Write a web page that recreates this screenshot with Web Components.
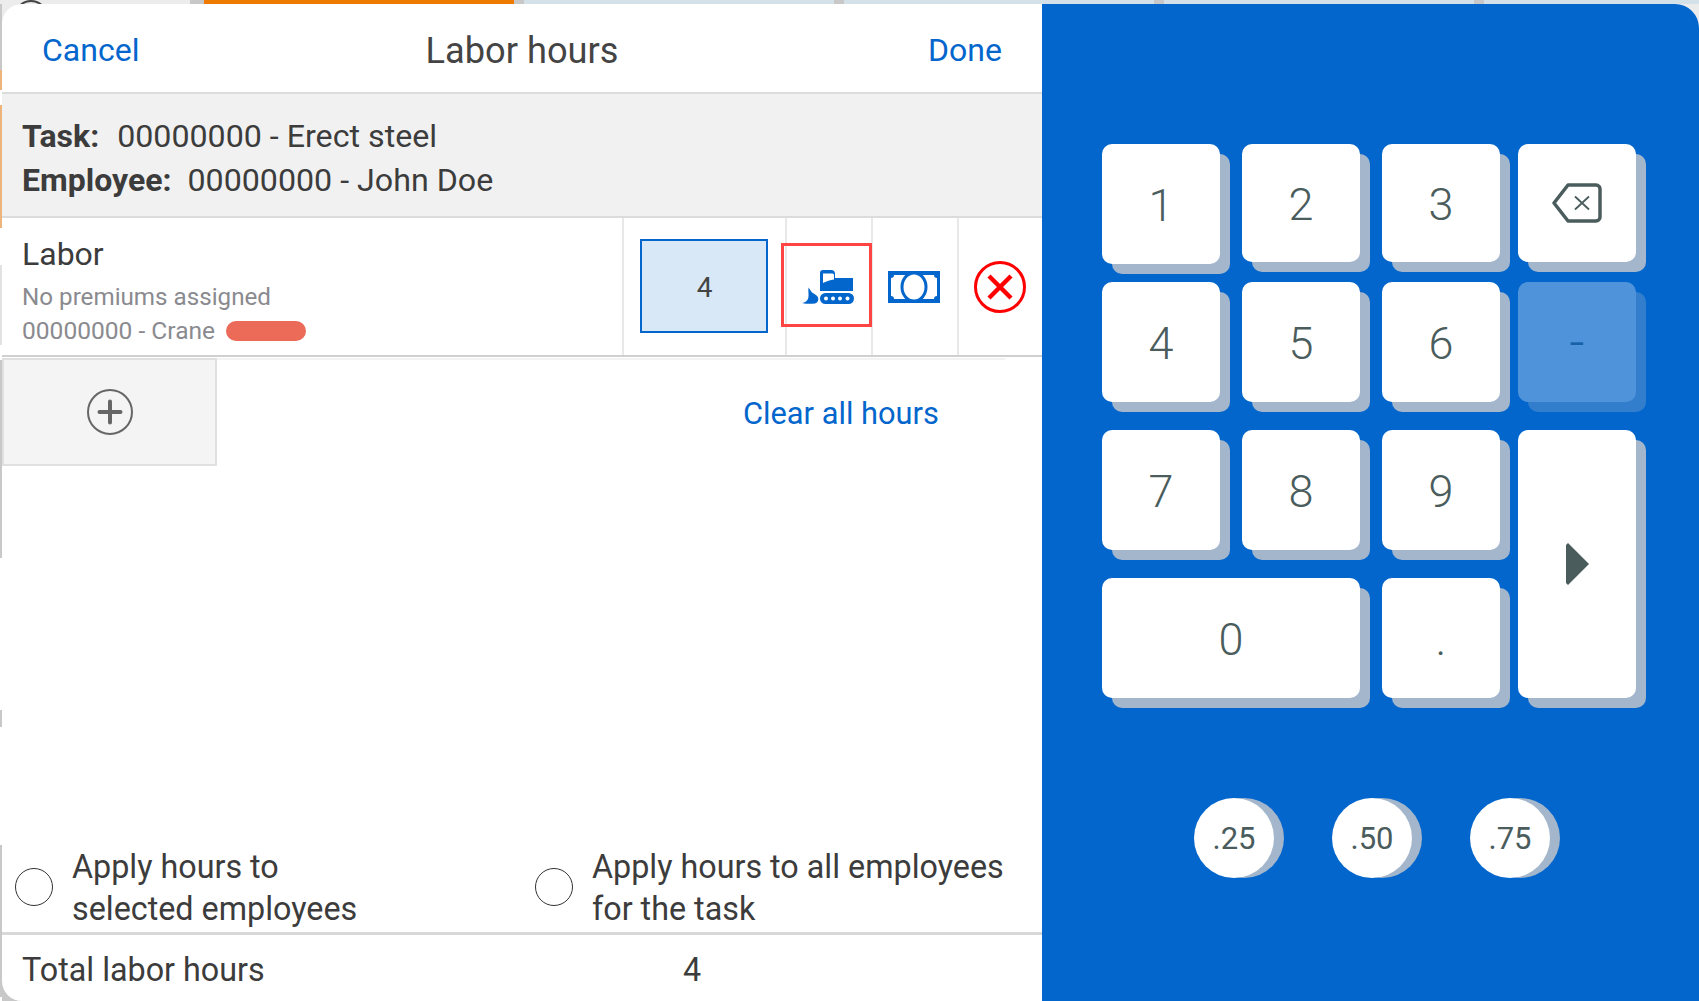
<!DOCTYPE html>
<html lang="en">
<head>
<meta charset="utf-8">
<title>Labor hours</title>
<style>
  html, body { margin: 0; height: 100%; overflow: hidden; }
  body { font-family: Roboto, "Liberation Sans", sans-serif; }
</style>
</head>
<body>
<labor-hours-screen>
  <dialog-header slot="left">
    <span slot="start">Cancel</span>
    Labor hours
    <span slot="end">Done</span>
  </dialog-header>
  <task-summary slot="left">
    <span slot="task">00000000 - Erect steel</span>
    <span slot="employee">00000000 - John Doe</span>
  </task-summary>
  <labor-row slot="left" value="4">
    <span slot="title">Labor</span>
    <span slot="premium">No premiums assigned</span>
    <span slot="equipment">00000000 - Crane</span>
  </labor-row>
  <add-row slot="left">Clear all hours</add-row>
  <apply-options slot="left">
    <radio-option>Apply hours to<br>selected employees</radio-option>
    <radio-option>Apply hours to all employees<br>for the task</radio-option>
  </apply-options>
  <total-row slot="left" value="4">Total labor hours</total-row>
  <key-pad slot="right"></key-pad>
</labor-hours-screen>

<script>
// Строит shadow root из строки разметки
function shadow(el, html) {
  el.attachShadow({ mode: 'open' }).innerHTML = html;
}

class LaborHoursScreen extends HTMLElement {
  constructor() {
    super();
    // Полоса и рейка - то, что виднеется из-под модального окна
    const strip = [
      [190, '#ececec'], [14, '#c8c8c8'], [310, '#ee7a00'], [10, '#c8c8c8'], [310, '#d5e1e8'],
      [10, '#c8c8c8'], [310, '#d5e1e8'], [10, '#c8c8c8'], [310, '#d5e1e8'], [10, '#c8c8c8'], [215, '#d5e1e8'],
    ].map(([w, c]) => `<i style="width:${w}px;background:${c}"></i>`).join('');
    const rail = [
      [70, '#c8c8c8'], [20, '#edb47c'], [15, '#fff'], [123, '#edb47c'], [37, '#fff'], [80, '#e2e2e2'],
      [15, '#fff'], [198, '#c8c8c8'], [152, '#fff'], [17, '#c8c8c8'], [118, '#fff'], [152, '#c8c8c8'],
    ].map(([h, c]) => `<i style="height:${h}px;background:${c}"></i>`).join('');

    shadow(this, `
      <style>
        :host {
          display: grid;
          grid-template-columns: 2px 1fr;
          grid-template-rows: 4px 997px;
          width: 1699px;
          height: 1001px;
          background: linear-gradient(#ececec 0 40px, #c8c8c8 40px);
        }
        .strip { grid-column: 1 / 3; display: flex; position: relative; overflow: hidden; }
        .strip i { display: block; flex: none; height: 4px; }
        .arc {
          position: absolute; left: 14px; top: 0; width: 34px; height: 34px;
          border: 2px solid #444; border-radius: 50%; box-sizing: border-box;
        }
        .rail { display: flex; flex-direction: column; margin-top: -4px; overflow: hidden; background: #fff; }
        .rail i { display: block; flex: none; width: 1.5px; }
        .modal {
          display: grid;
          grid-template-columns: 1040px 1fr;
          border-radius: 20px 24px 0 20px;
          overflow: hidden;
          background: #fff;
        }
        .left { display: flex; flex-direction: column; min-height: 0; }
        .right { background: #0366cc; }
      </style>
      <div class="strip">${strip}<div class="arc"></div></div>
      <div class="rail">${rail}</div>
      <div class="modal">
        <div class="left"><slot name="left"></slot></div>
        <div class="right"><slot name="right"></slot></div>
      </div>
    `);
  }
}

class DialogHeader extends HTMLElement {
  constructor() {
    super();
    shadow(this, `
      <style>
        :host {
          display: grid;
          grid-template-columns: 1fr auto 1fr;
          align-items: center;
          height: 84px;
          padding: 4px 40px 0;
          border-bottom: 2px solid #dcdcdc;
          color: #444;
          font-size: 36.200px;
        }
        .link { color: #0366cc; font-size: 32px; }
        .end { text-align: right; }
      </style>
      <div class="link"><slot name="start"></slot></div>
      <div><slot></slot></div>
      <div class="link end"><slot name="end"></slot></div>
    `);
  }
}

class TaskSummary extends HTMLElement {
  constructor() {
    super();
    shadow(this, `
      <style>
        :host {
          display: flex;
          flex-direction: column;
          justify-content: center;
          height: 116px;
          padding: 6px 20px 0;
          background: #f1f1f1;
          border-bottom: 2px solid #dcdcdc;
          color: #3c3c3c;
          font-size: 32.200px;
          line-height: 44px;
        }
        b { font-size: 32px; font-weight: 700; margin-right: 10px; }
        .tight { margin-right: 8px; }
      </style>
      <div><b>Task:</b> <slot name="task"></slot></div>
      <div><b class="tight">Employee:</b> <slot name="employee"></slot></div>
    `);
  }
}

class LaborRow extends HTMLElement {
  constructor() {
    super();
    shadow(this, `
      <style>
        :host {
          display: grid;
          grid-template-columns: 620px 163px 86px 86px 1fr;
          height: 137px;
          border-bottom: 2px solid #d0d0d0;
        }
        .info { padding: 14px 0 0 20px; color: #8a8a8f; font-size: 24.200px; }
        .title { color: #3c3c3c; font-size: 32px; line-height: 44px; margin-bottom: 5px; }
        .line { line-height: 33px; display: flex; align-items: center; }
        .equipment { font-size: 24.550px; }
        .pill { width: 80px; height: 20px; margin: 1px 0 0 11px; border-radius: 10px; background: #ec6a58; }
        .cell {
          display: flex; align-items: center; justify-content: center;
          border-left: 2px solid #e8e8e8; position: relative;
        }
        .input {
          box-sizing: border-box; width: 128px; height: 94px;
          padding: 2px 0 0 2px; margin: 0 2px 1px 0;
          display: flex; align-items: center; justify-content: center;
          border: 2px solid #0366cc; background: #d9e8f7;
          color: #444; font-size: 28px;
        }
        .focus {
          position: absolute; z-index: 1; left: -6px; top: 25px; width: 91px; height: 84px;
          box-sizing: border-box; border: 3px solid #ff4444;
        }
        .nudge { margin-left: -2px; }
        svg { display: block; }
      </style>
      <div class="info">
        <div class="title"><slot name="title"></slot></div>
        <div class="line"><slot name="premium"></slot></div>
        <div class="line equipment"><slot name="equipment"></slot><div class="pill"></div></div>
      </div>
      <div class="cell"><div class="input">${this.getAttribute('value')}</div></div>
      <div class="cell">
        <div class="focus"></div>
        <svg class="nudge" width="52" height="34" viewBox="0 0 52 34" fill="#0366cc">
          <path d="M18 3a3 3 0 0 1 3-3h8a4 4 0 0 1 4 4v4h18v13H18z"/>
          <path fill="#fff" d="M21 3.500h9.500a1.500 1.500 0 0 1 1.500 1.500v4.500c-4 .5-7 1.500-11 3.500z"/>
          <rect x="18" y="23" width="34" height="11" rx="5.500"/>
          <g fill="#fff"><circle cx="24" cy="28.500" r="2"/><circle cx="31" cy="28.500" r="2"/><circle cx="38" cy="28.500" r="2"/><circle cx="45.500" cy="28.500" r="2"/></g>
          <path d="M6.500 17.500l3.500 5c3 1.500 5.500 3 6.200 5.500.6 2.500-.7 5-3.200 5.500C9 34 4 34 0 33c3-.5 5.500-2 6.300-5 .7-3.500-.3-7 .2-10.500z"/>
        </svg>
      </div>
      <div class="cell">
        <svg class="nudge" width="52" height="32" viewBox="0 0 52 32">
          <rect width="52" height="32" fill="#0366cc"/>
          <path fill="#fff" d="M6 4h40c0 2 1 3 3 3v18c-2 0-3 1-3 3H6c0-2-1-3-3-3V7c2 0 3-1 3-3z"/>
          <ellipse cx="26" cy="16" rx="12" ry="14" fill="#fff" stroke="#0366cc" stroke-width="3"/>
        </svg>
      </div>
      <div class="cell">
        <svg class="nudge" width="52" height="52" viewBox="0 0 52 52" fill="none" stroke="#f00">
          <circle cx="26" cy="26" r="24.500" stroke-width="3"/>
          <path d="M15 15l22 22M37 15L15 37" stroke-width="4.500"/>
        </svg>
      </div>
    `);
  }
}

class AddRow extends HTMLElement {
  constructor() {
    super();
    shadow(this, `
      <style>
        :host { display: flex; margin-top: 1px; }
        .add {
          box-sizing: border-box; width: 215px; height: 108px;
          display: flex; align-items: center; justify-content: center;
          background: #f4f4f4; border: 2px solid #e0e0e0;
        }
        .rest {
          box-sizing: border-box; width: 788px; padding-left: 526px;
          display: flex; align-items: center;
          border-top: 2px solid #f3f3f3;
          color: #0366cc; font-size: 30.800px;
        }
      </style>
      <div class="add">
        <svg width="46" height="46" viewBox="0 0 46 46" fill="none" stroke="#666">
          <circle cx="23" cy="23" r="22" stroke-width="2"/>
          <path d="M12.500 23h21M23 12.500v21" stroke-width="4" stroke-linecap="round"/>
        </svg>
      </div>
      <div class="rest"><slot></slot></div>
    `);
  }
}

class ApplyOptions extends HTMLElement {
  constructor() {
    super();
    shadow(this, `
      <style>
        :host {
          display: grid;
          grid-template-columns: 520px 1fr;
          align-items: center;
          margin-top: auto;
          padding: 0 0 2px 13px;
          height: 86px;
          border-bottom: 3px solid #d8d8d8;
        }
      </style>
      <slot></slot>
    `);
  }
}

class RadioOption extends HTMLElement {
  constructor() {
    super();
    shadow(this, `
      <style>
        :host {
          display: flex; align-items: center; gap: 19px;
          color: #3c3c3c; font-size: 32.300px; line-height: 42px;
        }
        .dot {
          flex: none; box-sizing: border-box; width: 38px; height: 38px;
          border: 1.500px solid #333; border-radius: 50%;
        }
        .text { padding-top: 2px; }
      </style>
      <div class="dot"></div>
      <div class="text"><slot></slot></div>
    `);
  }
}

class TotalRow extends HTMLElement {
  constructor() {
    super();
    shadow(this, `
      <style>
        :host {
          display: grid;
          grid-template-columns: 661px auto;
          align-items: center;
          height: 62px;
          padding: 4px 0 0 20px;
          color: #3c3c3c;
          font-size: 32.300px;
        }
      </style>
      <div><slot></slot></div>
      <div>${this.getAttribute('value')}</div>
    `);
  }
}

class NumKey extends HTMLElement {
  constructor() {
    super();
    shadow(this, `
      <style>
        :host {
          box-sizing: border-box;
          display: flex; align-items: center; justify-content: center;
          padding-top: 2px;
          background: #fff;
          border-radius: 10px;
          box-shadow: 10px 10px 0 #a3b6cc;
          color: #4a5c5c;
          font-size: 45px;
          font-weight: 300;
        }
        :host([disabled]) { opacity: .3; font-size: 54px; padding-top: 0; }
      </style>
      <slot></slot>
    `);
  }
}

class QuickKey extends HTMLElement {
  constructor() {
    super();
    shadow(this, `
      <style>
        :host {
          display: flex; align-items: center; justify-content: center;
          width: 80px; height: 80px;
          border-radius: 50%;
          background: #fff;
          box-shadow: 10px 0 0 #a3b6cc;
          color: #4a5c5c;
          font-size: 31px;
        }
      </style>
      <slot></slot>
    `);
  }
}

class KeyPad extends HTMLElement {
  constructor() {
    super();
    shadow(this, `
      <style>
        :host { display: block; padding: 140px 0 0 60px; }
        .grid {
          display: grid;
          grid-template-columns: 118px 22px 118px 22px 118px 18px 118px;
          grid-template-rows: 120px 18px 120px 28px 120px 28px 120px;
        }
        .short { height: 118px; }
        .icon { padding-top: 0; }
        .quick { display: flex; gap: 58px; margin: 100px 0 0 92px; }
        svg { display: block; }
      </style>
      <div class="grid">
        <num-key style="grid-area:1/1">1</num-key>
        <num-key class="short" style="grid-area:1/3">2</num-key>
        <num-key class="short" style="grid-area:1/5">3</num-key>
        <num-key class="short icon" style="grid-area:1/7">
          <svg width="50" height="40" viewBox="0 0 50 40" fill="none" stroke="#4a5c5c">
            <path d="M16 2h28a4 4 0 0 1 4 4v28a4 4 0 0 1-4 4H16L2 20z" stroke-width="3.500" stroke-linejoin="round"/>
            <path d="M23 13.500l14 13M37 13.500l-14 13" stroke-width="1.800"/>
          </svg>
        </num-key>
        <num-key style="grid-area:3/1">4</num-key>
        <num-key style="grid-area:3/3">5</num-key>
        <num-key style="grid-area:3/5">6</num-key>
        <num-key disabled style="grid-area:3/7">-</num-key>
        <num-key style="grid-area:5/1">7</num-key>
        <num-key style="grid-area:5/3">8</num-key>
        <num-key style="grid-area:5/5">9</num-key>
        <num-key class="icon" style="grid-area:5/7/8/8">
          <svg width="23" height="42" viewBox="0 0 23 42" fill="#4a5c5c">
            <path d="M0 2l2-2 21 21-21 21-2-2z"/>
          </svg>
        </num-key>
        <num-key style="grid-area:7/1/8/4">0</num-key>
        <num-key style="grid-area:7/5">.</num-key>
      </div>
      <div class="quick">
        <quick-key>.25</quick-key>
        <quick-key>.50</quick-key>
        <quick-key>.75</quick-key>
      </div>
    `);
  }
}

customElements.define('labor-hours-screen', LaborHoursScreen);
customElements.define('dialog-header', DialogHeader);
customElements.define('task-summary', TaskSummary);
customElements.define('labor-row', LaborRow);
customElements.define('add-row', AddRow);
customElements.define('apply-options', ApplyOptions);
customElements.define('radio-option', RadioOption);
customElements.define('total-row', TotalRow);
customElements.define('num-key', NumKey);
customElements.define('quick-key', QuickKey);
customElements.define('key-pad', KeyPad);
</script>
</body>
</html>
